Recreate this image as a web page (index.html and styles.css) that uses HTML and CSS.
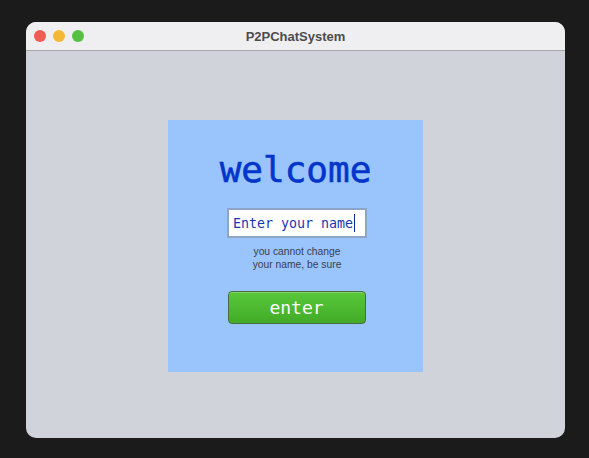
FILE: index.html
```html
<!DOCTYPE html>
<html>
<head>
<meta charset="utf-8">
<link rel="stylesheet" href="styles.css">
</head>
<body>
<div class="window">
  <div class="titlebar">
    <div class="lights">
      <span class="light red"></span>
      <span class="light yellow"></span>
      <span class="light green"></span>
    </div>
    <div class="title">P2PChatSystem</div>
  </div>
  <div class="content">
    <div class="panel">
      <div class="welcome">welcome</div>
      <div class="field"><span class="placeholder">Enter your name</span><span class="caret"></span></div>
      <div class="hint">you cannot change<br>your name, be sure</div>
      <button class="enter">enter</button>
    </div>
  </div>
</div>
</body>
</html>
```
FILE: styles.css
```css
html, body {
  margin: 0;
  padding: 0;
  background: #1b1b1b;
  width: 589px;
  height: 458px;
  overflow: hidden;
}
body {
  padding: 22px 0 0 26px;
  box-sizing: border-box;
}
.window {
  width: 539px;
  height: 416px;
  border-radius: 10px;
  overflow: hidden;
  background: #d0d3da;
  display: flex;
  flex-direction: column;
}
.titlebar {
  height: 28px;
  flex: none;
  background: #efeff1;
  border-bottom: 1px solid #a9a9ab;
  position: relative;
  display: flex;
  align-items: center;
  justify-content: center;
}
.lights {
  position: absolute;
  left: 8px;
  top: 8px;
  display: flex;
  gap: 7px;
}
.light {
  width: 12px;
  height: 12px;
  border-radius: 50%;
  display: block;
}
.red { background: #ee5c53; }
.yellow { background: #f5b836; }
.green { background: #54c142; }
.title {
  font-family: "Liberation Sans", Arial, sans-serif;
  font-weight: bold;
  font-size: 13px;
  color: #4c4c4c;
}
.content {
  flex: 1;
  display: flex;
  justify-content: center;
  padding-top: 69px;
}
.panel {
  width: 255px;
  height: 252px;
  background: #99c4fc;
  display: flex;
  flex-direction: column;
  align-items: center;
}
.welcome {
  font-family: "DejaVu Sans Mono", monospace;
  font-size: 36px;
  color: #0335cb;
  margin-top: 28px;
  line-height: 44px;
  -webkit-text-stroke: 0.6px #0335cb;
}
.field {
  margin-top: 16px;
  margin-left: 3px;
  width: 132px;
  height: 26px;
  background: #fff;
  border: 2px solid #8fa5c7;
  display: flex;
  align-items: center;
  padding-left: 4px;
  box-sizing: content-box;
}
.placeholder {
  font-family: "DejaVu Sans Mono", monospace;
  font-size: 13.3px;
  color: #1437b5;
  white-space: nowrap;
}
.caret {
  width: 1px;
  height: 18px;
  background: #0a2a9a;
  margin-left: 1px;
}
.hint {
  margin-top: 7px;
  font-family: "Liberation Sans", Arial, sans-serif;
  font-size: 10.3px;
  line-height: 13px;
  color: #3a3f4c;
  text-align: center;
  margin-left: 3px;
}
.enter {
  margin-top: 20px;
  margin-left: 2px;
  width: 138px;
  height: 33px;
  border: 1px solid #4a6a40;
  border-radius: 4px;
  background: linear-gradient(#58c83a, #42ab28);
  color: #fff;
  font-family: "DejaVu Sans Mono", monospace;
  font-size: 18px;
  padding: 0;
  box-shadow: inset 0 1px 0 rgba(255,255,255,0.25);
}
```
